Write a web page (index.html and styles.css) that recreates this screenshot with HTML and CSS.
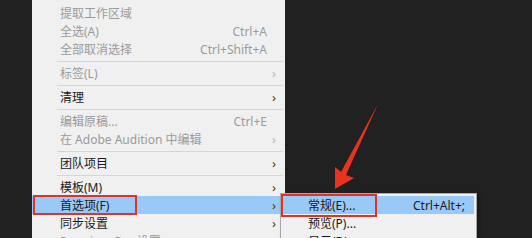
FILE: index.html
```html
<!DOCTYPE html>
<html lang="zh">
<head>
<meta charset="utf-8">
<link rel="stylesheet" href="styles.css">
</head>
<body>
<div class="stage">
  <div class="menu">
    <div class="row dis"><span class="label">提取工作区域</span><span class="key"></span><span class="arr"></span></div>
    <div class="row dis"><span class="label">全选(A)</span><span class="key">Ctrl+A</span><span class="arr"></span></div>
    <div class="row dis"><span class="label">全部取消选择</span><span class="key">Ctrl+Shift+A</span><span class="arr"></span></div>
    <div class="sep"></div>
    <div class="row dis"><span class="label">标签(L)</span><span class="key"></span><span class="arr">&#x203A;</span></div>
    <div class="sep"></div>
    <div class="row"><span class="label">清理</span><span class="key"></span><span class="arr">&#x203A;</span></div>
    <div class="sep"></div>
    <div class="row dis"><span class="label">编辑原稿...</span><span class="key">Ctrl+E</span><span class="arr"></span></div>
    <div class="row dis"><span class="label">在 Adobe Audition 中编辑</span><span class="key"></span><span class="arr">&#x203A;</span></div>
    <div class="sep"></div>
    <div class="row"><span class="label">团队项目</span><span class="key"></span><span class="arr">&#x203A;</span></div>
    <div class="sep"></div>
    <div class="row"><span class="label">模板(M)</span><span class="key"></span><span class="arr">&#x203A;</span></div>
    <div class="row hl"><span class="label">首选项(F)</span><span class="key"></span><span class="arr">&#x203A;</span><span class="mark mark-main"></span></div>
    <div class="row"><span class="label">同步设置</span><span class="key"></span><span class="arr">&#x203A;</span></div>
    <div class="row dis"><span class="label">Premiere Pro 设置</span><span class="key"></span><span class="arr"></span></div>
  </div>

  <div class="submenu">
    <div class="srow hl"><span class="label">常规(E)...</span><span class="key">Ctrl+Alt+;</span><span class="mark mark-sub"></span></div>
    <div class="srow"><span class="label">预览(P)...</span><span class="key"></span></div>
    <div class="srow"><span class="label">显示(D)...</span><span class="key"></span></div>
  </div>

  <svg class="pointer" width="532" height="238" viewBox="0 0 532 238">
    <polygon points="378,104 346,175 354,178 335,189 335,167 341,172" fill="#e8331f"/>
  </svg>
</div>
</body>
</html>
```

FILE: styles.css
```css
html, body {
  margin: 0;
  padding: 0;
}
body {
  background: #212121;
  width: 532px;
  height: 238px;
  overflow: hidden;
  font-family: "Noto Sans", "Noto Sans CJK SC", sans-serif;
  font-size: 12px;
}
.stage {
  position: relative;
  width: 532px;
  height: 238px;
  display: flex;
  padding-left: 32px;
  box-sizing: border-box;
}
.menu {
  width: 253px;
  background: #f0f0f0;
  padding-top: 4px;
  box-sizing: border-box;
  height: 270px;
}
.row {
  position: relative;
  display: flex;
  align-items: center;
  height: 18px;
  padding: 0 4px 0 28px;
  color: #1a1a1a;
  white-space: nowrap;
}
.row .label {
  flex: 1;
}
.row .key {
  color: inherit;
}
.row .arr {
  width: 14px;
  text-align: center;
  font-size: 13px;
  color: #3a3a3a;
}
.row.dis {
  color: #9b9b9b;
}
.row.dis .arr {
  color: #b5b5b5;
}
.row.hl {
  background: #99c9f7;
}
.sep {
  height: 6px;
  display: flex;
  align-items: center;
  padding-left: 25px;
  padding-right: 2px;
}
.sep::before {
  content: "";
  flex: 1;
  height: 1px;
  background: #d6d6d6;
}
.mark {
  position: absolute;
  border: 2.5px solid #e0312b;
  box-sizing: border-box;
}
.mark-main {
  left: 1px;
  top: -1px;
  width: 104px;
  height: 20px;
}
.submenu {
  position: absolute;
  left: 280px;
  top: 193px;
  width: 197px;
  height: 60px;
  background: #f0f0f0;
  border: 1px solid #a8a8a8;
  box-sizing: border-box;
  padding: 1px 2px 0 2px;
  box-shadow: 2px 2px 3px rgba(0,0,0,0.35);
}
.srow {
  position: relative;
  display: flex;
  align-items: center;
  height: 18px;
  padding-left: 25px;
  color: #1a1a1a;
  white-space: nowrap;
}
.srow .label {
  width: 105px;
}
.srow.hl {
  background: #99c9f7;
  margin-top: 1px;
}
.mark-sub {
  left: -2px;
  top: -2px;
  width: 96px;
  height: 23px;
}
.pointer {
  position: absolute;
  left: 0;
  top: 0;
  pointer-events: none;
}
```
